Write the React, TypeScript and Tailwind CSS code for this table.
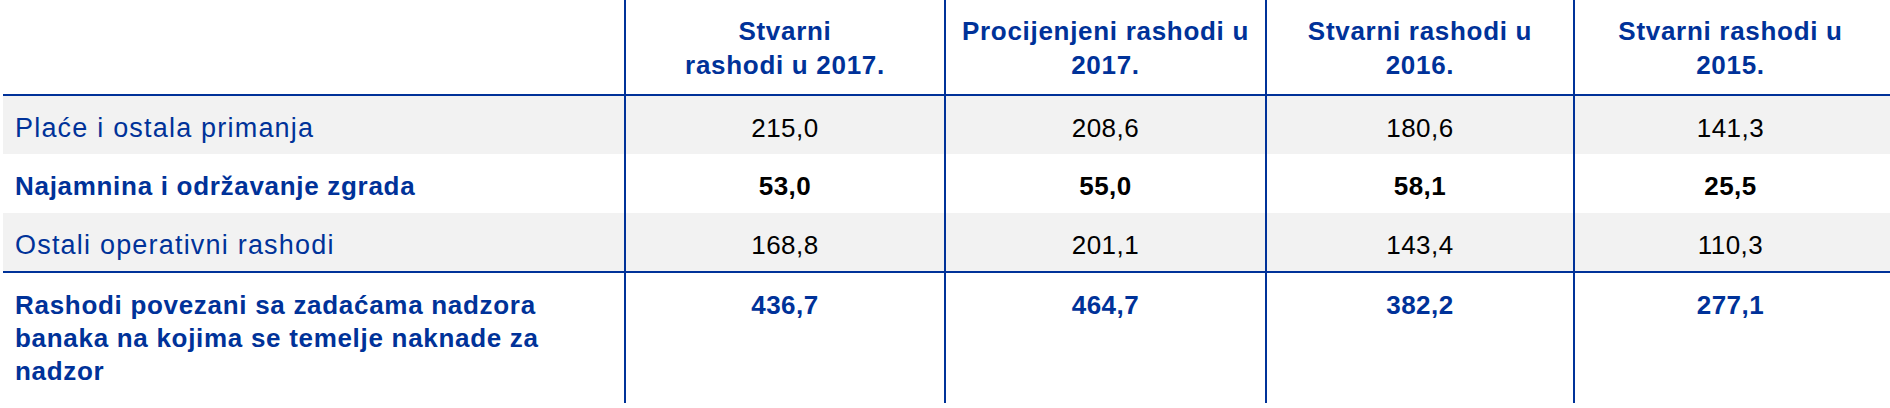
const rows = [
  { label: "Plaće i ostala primanja", values: ["215,0", "208,6", "180,6", "141,3"], bold: false, gray: true, h: "h-[58px]" },
  { label: "Najamnina i održavanje zgrada", values: ["53,0", "55,0", "58,1", "25,5"], bold: true, gray: false, h: "h-[59px]" },
  { label: "Ostali operativni rashodi", values: ["168,8", "201,1", "143,4", "110,3"], bold: false, gray: true, h: "h-[60px] border-b-2 border-[#003299]" },
];

const widths = ["w-[320px]", "w-[321px]", "w-[308px]", "w-[313px]"];

export default function App() {
  return (
    <div
      className="w-[1890px] h-[408px] bg-white pl-[3px] text-[26px]"
      style={{ fontFamily: '"Liberation Sans", Arial, sans-serif' }}
    >
      {/* HEADER */}
      <div className="flex h-[96px] border-b-2 border-[#003299]">
        <div className="w-[621px]" />
        {[
          ["Stvarni", "rashodi u 2017."],
          ["Procijenjeni rashodi u", "2017."],
          ["Stvarni rashodi u", "2016."],
          ["Stvarni rashodi u", "2015."],
        ].map((lines, i) => (
          <div
            key={i}
            className={`${widths[i]} border-l-2 border-[#003299] pt-[14px] text-center font-bold leading-[34px] tracking-[0.7px] text-[#003299]`}
          >
            {lines[0]}
            <br />
            {lines[1]}
          </div>
        ))}
      </div>

      {/* ROWS */}
      {rows.map((row, r) => (
        <div key={r} className={`flex ${row.h} ${row.gray ? "bg-[#f2f2f2]" : "bg-white"}`}>
          <div
            className={`w-[621px] pl-[12px] pt-[15px] leading-[34px] text-[#003299] ${row.bold ? "font-bold tracking-[0.7px]" : "text-[27px] tracking-[1.2px]"}`}
          >
            {row.label}
          </div>
          {row.values.map((v, i) => (
            <div
              key={i}
              className={`${widths[i]} border-l-2 border-[#003299] pt-[15px] text-center leading-[34px] text-black ${row.bold ? "font-bold" : ""} tracking-[0.5px]`}
            >
              {v}
            </div>
          ))}
        </div>
      ))}

      {/* TOTAL */}
      <div className="flex h-[130px]">
        <div className="w-[621px] pl-[12px] pt-[16px] font-bold leading-[33px] tracking-[0.7px] text-[#003299]">
          Rashodi povezani sa zadaćama nadzora
          <br />
          banaka na kojima se temelje naknade za
          <br />
          nadzor
        </div>
        {["436,7", "464,7", "382,2", "277,1"].map((v, i) => (
          <div
            key={i}
            className={`${widths[i]} border-l-2 border-[#003299] pt-[16px] text-center font-bold leading-[33px] tracking-[0.5px] text-[#003299]`}
          >
            {v}
          </div>
        ))}
      </div>
    </div>
  );
}
